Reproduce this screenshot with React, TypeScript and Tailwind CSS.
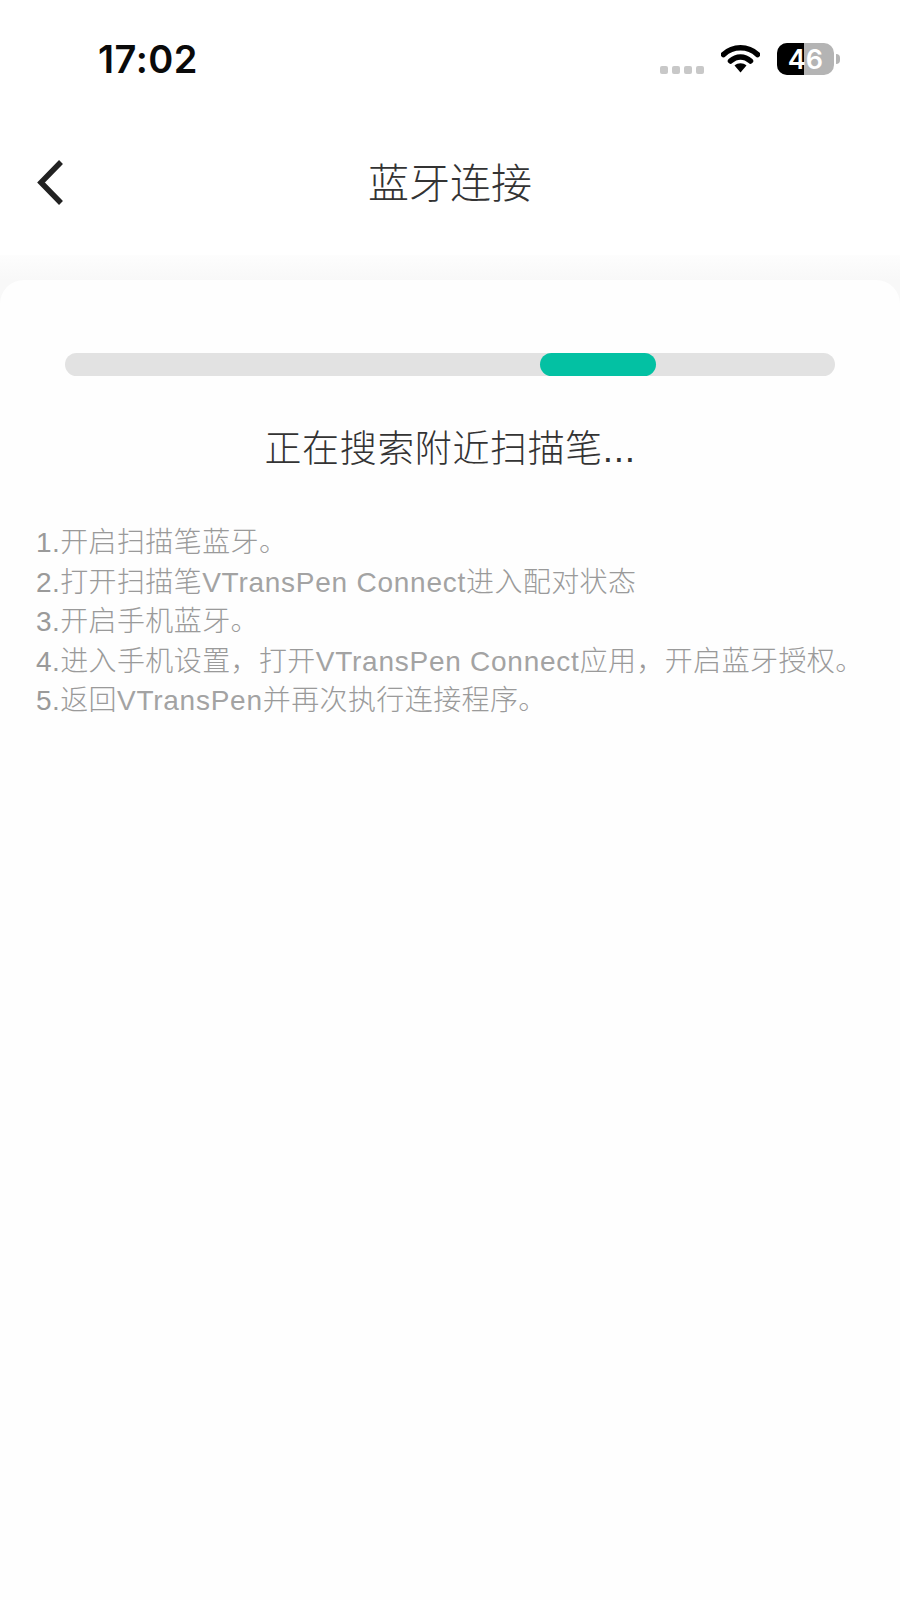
const Latin = ({ children }: { children: string }) => {
  return <span className="tracking-[0.75px] text-[#a3a3a3]">{children}</span>;
};

const StatusBar = () => {
  return (
    <div className="h-[120px] flex items-start justify-between pl-[98px] pr-[60px] pt-[37px]">
      <span className="font-['Inter',sans-serif] text-[38px] leading-[45px] tracking-[0.5px] font-semibold text-[#0a0a0a]">
        17:02
      </span>
      <div className="flex items-start pt-[6px]">
        <div className="flex gap-[4px] mt-[23px] mr-[17px]">
          <span className="w-[8px] h-[8px] rounded-[2px] bg-[#c8c8c8]" />
          <span className="w-[8px] h-[8px] rounded-[2px] bg-[#c8c8c8]" />
          <span className="w-[8px] h-[8px] rounded-[2px] bg-[#c8c8c8]" />
          <span className="w-[8px] h-[8px] rounded-[2px] bg-[#c8c8c8]" />
        </div>
        <svg width="39" height="30" viewBox="0 0 39 30" className="mr-[17px]">
          <path d="M2.5 11.5C12 2.5 27 2.5 36.5 11.5" fill="none" stroke="#000" strokeWidth="5.5" strokeLinecap="round" />
          <path d="M9.5 18C15.5 12.5 23.5 12.5 29.5 18" fill="none" stroke="#000" strokeWidth="5.5" strokeLinecap="round" />
          <path d="M13.5 22.5C17 19.5 22 19.5 25.5 22.5L19.5 29.5Z" fill="#000" />
        </svg>
        <div className="relative w-[57px] h-[32px] rounded-[10px] overflow-hidden bg-[#b4b4b4] flex items-center justify-center">
          <div className="absolute left-0 top-0 bottom-0 w-[27px] bg-black" />
          <span className="relative font-['Inter',sans-serif] text-[27px] leading-none font-semibold text-white">46</span>
        </div>
        <div className="w-[4px] h-[10px] mt-[11px] ml-[2px] rounded-r-full bg-[#b4b4b4]" />
      </div>
    </div>
  );
};

const Header = () => {
  return (
    <div className="relative h-[135px] flex items-center justify-center pb-[8px]">
      <svg width="32" height="50" viewBox="0 0 32 50" className="absolute left-[35px] top-[38px]">
        <path d="M26 4L6 24.5L26 45" fill="none" stroke="#222" strokeWidth="5.5" />
      </svg>
      <span className="text-[41px] leading-[56px] font-light text-[#333]">蓝牙连接</span>
    </div>
  );
};

export default function App() {
  return (
    <div className="w-[900px] h-[1600px] flex flex-col bg-white font-['Liberation_Sans','Noto_Sans_CJK_SC',sans-serif] overflow-hidden">
      <StatusBar />
      <Header />
      <div className="flex-1 flex flex-col bg-[#f8f8f8]">
        <div className="h-[25px] bg-gradient-to-b from-[#fdfdfd] to-[#f8f8f8]" />
        <div className="flex-1 rounded-t-[24px] bg-[#fefefe] pt-[73px]">
          <div className="relative mx-[65px] h-[23px] rounded-full bg-[#e2e2e2]">
            <div className="absolute left-[475px] top-0 w-[116px] h-[23px] rounded-full bg-[#03c1a3]" />
          </div>
          <p className="mt-[47px] text-center text-[37px] leading-[54px] tracking-[0.6px] font-light text-[#333]">正在搜索附近扫描笔...</p>
          <div className="mt-[46px] pl-[36px] text-[28px] leading-[39.5px] tracking-[0.4px] font-light text-[#9a9a9a] whitespace-nowrap">
            <p>1.开启扫描笔蓝牙。</p>
            <p>2.打开扫描笔<Latin>VTransPen Connect</Latin>进入配对状态</p>
            <p>3.开启手机蓝牙。</p>
            <p>4.进入手机设置，打开<Latin>VTransPen Connect</Latin>应用，开启蓝牙授权。</p>
            <p>5.返回<Latin>VTransPen</Latin>并再次执行连接程序。</p>
          </div>
        </div>
      </div>
    </div>
  );
}
